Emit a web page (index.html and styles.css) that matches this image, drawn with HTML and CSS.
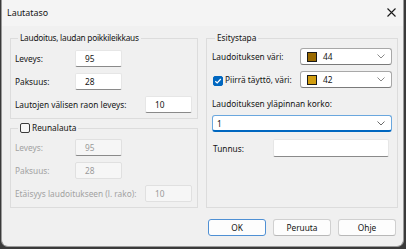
FILE: index.html
```html
<!DOCTYPE html>
<html lang="fi">
<head>
    <meta charset="UTF-8">
    <title>Lautataso</title>
    <link rel="stylesheet" href="styles.css">
</head>
<body>
    <div class="window">
        <div class="titlebar">
            <span class="title">Lautataso</span>
            <svg class="close" width="9" height="9" viewBox="0 0 9 9">
                <path d="M0.5 0.5 L8.5 8.5 M8.5 0.5 L0.5 8.5" stroke="#1a1a1a" stroke-width="1.1" fill="none"/>
            </svg>
        </div>

        <div class="content">
            <div class="columns">
                <div class="col-left">
                    <fieldset class="group group-top">
                        <legend>Laudoitus, laudan poikkileikkaus</legend>
                        <div class="row">
                            <span class="lbl">Leveys:</span>
                            <span class="field">95</span>
                        </div>
                        <div class="row">
                            <span class="lbl">Paksuus:</span>
                            <span class="field">28</span>
                        </div>
                        <div class="row">
                            <span class="lbl lbl-wide">Lautojen välisen raon leveys:</span>
                            <span class="field">10</span>
                        </div>
                    </fieldset>

                    <fieldset class="group group-edge">
                        <legend class="check-legend"><span class="check"></span>Reunalauta</legend>
                        <div class="row disabled">
                            <span class="lbl">Leveys:</span>
                            <span class="field field-off first-off">95</span>
                        </div>
                        <div class="row disabled">
                            <span class="lbl">Paksuus:</span>
                            <span class="field field-off">28</span>
                        </div>
                        <div class="row disabled">
                            <span class="lbl lbl-wide">Etäisyys laudoitukseen (l. rako):</span>
                            <span class="field field-off">10</span>
                        </div>
                    </fieldset>
                </div>

                <fieldset class="group group-right">
                    <legend>Esitystapa</legend>
                    <div class="row">
                        <span class="lbl lbl-right">Laudoituksen väri:</span>
                        <div class="combo">
                            <span class="swatch" style="background: #9a6a00"></span>
                            <span class="combo-text">44</span>
                            <svg class="chev" width="8" height="5" viewBox="0 0 8 5"><path d="M0.5 0.5 L4 4 L7.5 0.5" stroke="#8a8a8a" fill="none"/></svg>
                        </div>
                    </div>
                    <div class="row row-check">
                        <span class="lbl lbl-right"><span class="check checked"><svg width="8" height="8" viewBox="0 0 8 8"><path d="M1.3 4.2 L3.2 6 L6.8 2" stroke="#fff" stroke-width="1.2" fill="none"/></svg></span>Piirrä täyttö, väri:</span>
                        <div class="combo">
                            <span class="swatch" style="background: #d19d10"></span>
                            <span class="combo-text">42</span>
                            <svg class="chev" width="8" height="5" viewBox="0 0 8 5"><path d="M0.5 0.5 L4 4 L7.5 0.5" stroke="#8a8a8a" fill="none"/></svg>
                        </div>
                    </div>
                    <div class="caption">Laudoituksen yläpinnan korko:</div>
                    <div class="combo combo-focus">
                        <span class="combo-text">1</span>
                        <svg class="chev" width="8" height="5" viewBox="0 0 8 5"><path d="M0.5 0.5 L4 4 L7.5 0.5" stroke="#6a6a6a" fill="none"/></svg>
                    </div>
                    <div class="row row-id">
                        <span class="lbl lbl-id">Tunnus:</span>
                        <span class="field field-id"></span>
                    </div>
                </fieldset>
            </div>

            <div class="buttons">
                <span class="btn btn-default">OK</span>
                <span class="btn">Peruuta</span>
                <span class="btn">Ohje</span>
            </div>
        </div>
    </div>
</body>
</html>
```

FILE: styles.css
```css
/* Lautataso dialog */
body {
    margin: 0;
    padding: 0;
    background-color: #3a3a3a;
    font-family: "Noto Sans", "Open Sans", sans-serif;
    font-size: 8.3px;
    color: #141414;
}

.window {
    width: 401px;
    height: 246px;
    margin-left: 1px;
    background-color: #f0f0f0;
    border: 1px solid #9a9a9a;
    border-top: none;
    border-radius: 0 0 7px 7px;
    overflow: hidden;
}

.titlebar {
    height: 26px;
    display: flex;
    align-items: center;
    justify-content: space-between;
    padding: 0 7px 2px 5px;
    box-sizing: border-box;
    background-color: #f4f4f4;
}

.title {
    font-size: 8.9px;
}

.close {
    display: block;
    margin-top: 1px;
}

.content {
    padding: 6px 4px 0 8px;
}

.columns {
    display: grid;
    grid-template-columns: 188px 192px;
    column-gap: 8px;
}

.col-left {
    display: flex;
    flex-direction: column;
    gap: 3px;
}

.group {
    margin: 0;
    border: 1px solid #dcdcdc;
    padding: 6px 4px 5px 4px;
    min-width: 0;
}

.group legend {
    padding: 0 2px;
    margin-left: 3px;
    line-height: 12px;
}

.group-top legend {
    letter-spacing: -0.25px;
}

.group-edge {
    flex: 1;
    padding-top: 5px;
}

.group-right {
    padding: 4px 5px 0 5px;
}

.row {
    display: flex;
    align-items: center;
    height: 17px;
}

.row + .row {
    margin-top: 6px;
}

.lbl {
    width: 60px;
    flex-shrink: 0;
}

.lbl-wide {
    width: 130px;
}

.field {
    width: 47px;
    height: 17px;
    box-sizing: border-box;
    background-color: #fff;
    border: 1px solid #e6e6e6;
    border-bottom-color: #8a8a8a;
    border-radius: 2px;
    padding: 2px 0 0 9px;
    line-height: 12px;
}

.disabled .lbl {
    color: #a2a2a2;
}

.field-off {
    background-color: #f6f6f6;
    border-color: #e0e0e0;
    color: #9a9a9a;
}

.first-off {
    border-bottom-color: #8a8a8a;
}

.check {
    display: inline-flex;
    align-items: center;
    justify-content: center;
    width: 10px;
    height: 10px;
    box-sizing: border-box;
    border: 1px solid #3a3a3a;
    border-radius: 2px;
    background-color: #f7f7f7;
    vertical-align: -2px;
    margin-right: 2px;
}

.check-legend {
    margin-left: 1px;
    padding-left: 4px;
}

.check.checked {
    background-color: #0067c0;
    border-color: #0067c0;
}

.check.checked svg {
    display: block;
}

.lbl-right {
    width: 88px;
}

.row-check {
    margin-top: 5px;
}

.row-check .lbl-right {
    margin-left: 1px;
    width: 87px;
}

.combo {
    flex: 1;
    height: 17px;
    box-sizing: border-box;
    display: flex;
    align-items: center;
    background-color: #fff;
    border: 1px solid #a8a8a8;
    border-bottom-color: #7a7a7a;
    border-radius: 3px;
    padding: 0 6px 0 6px;
}

.swatch {
    width: 8px;
    height: 8px;
    border: 1px solid #1a1a1a;
    margin-right: 6px;
}

.combo-text {
    flex: 1;
}

.chev {
    display: block;
}

.caption {
    margin-top: 10px;
    line-height: 12px;
}

.combo-focus {
    margin-top: 5px;
    border-color: #6aa7de;
    border-bottom: 2px solid #0067c0;
    padding-left: 4px;
}

.row-id {
    margin-top: 7px;
    height: 18px;
}

.lbl-id {
    width: 60px;
    padding-left: 1px;
}

.field-id {
    width: 116px;
    height: 18px;
}

.buttons {
    display: flex;
    justify-content: flex-end;
    gap: 7px;
    margin-top: 11px;
    padding-right: 3px;
}

.btn {
    width: 58px;
    height: 17px;
    box-sizing: border-box;
    display: flex;
    align-items: center;
    justify-content: center;
    background-color: #fdfdfd;
    border: 1px solid #d0d0d0;
    border-bottom-color: #b8b8b8;
    border-radius: 3px;
}

.btn-default {
    border: 1px solid #4f90d4;
}
```
